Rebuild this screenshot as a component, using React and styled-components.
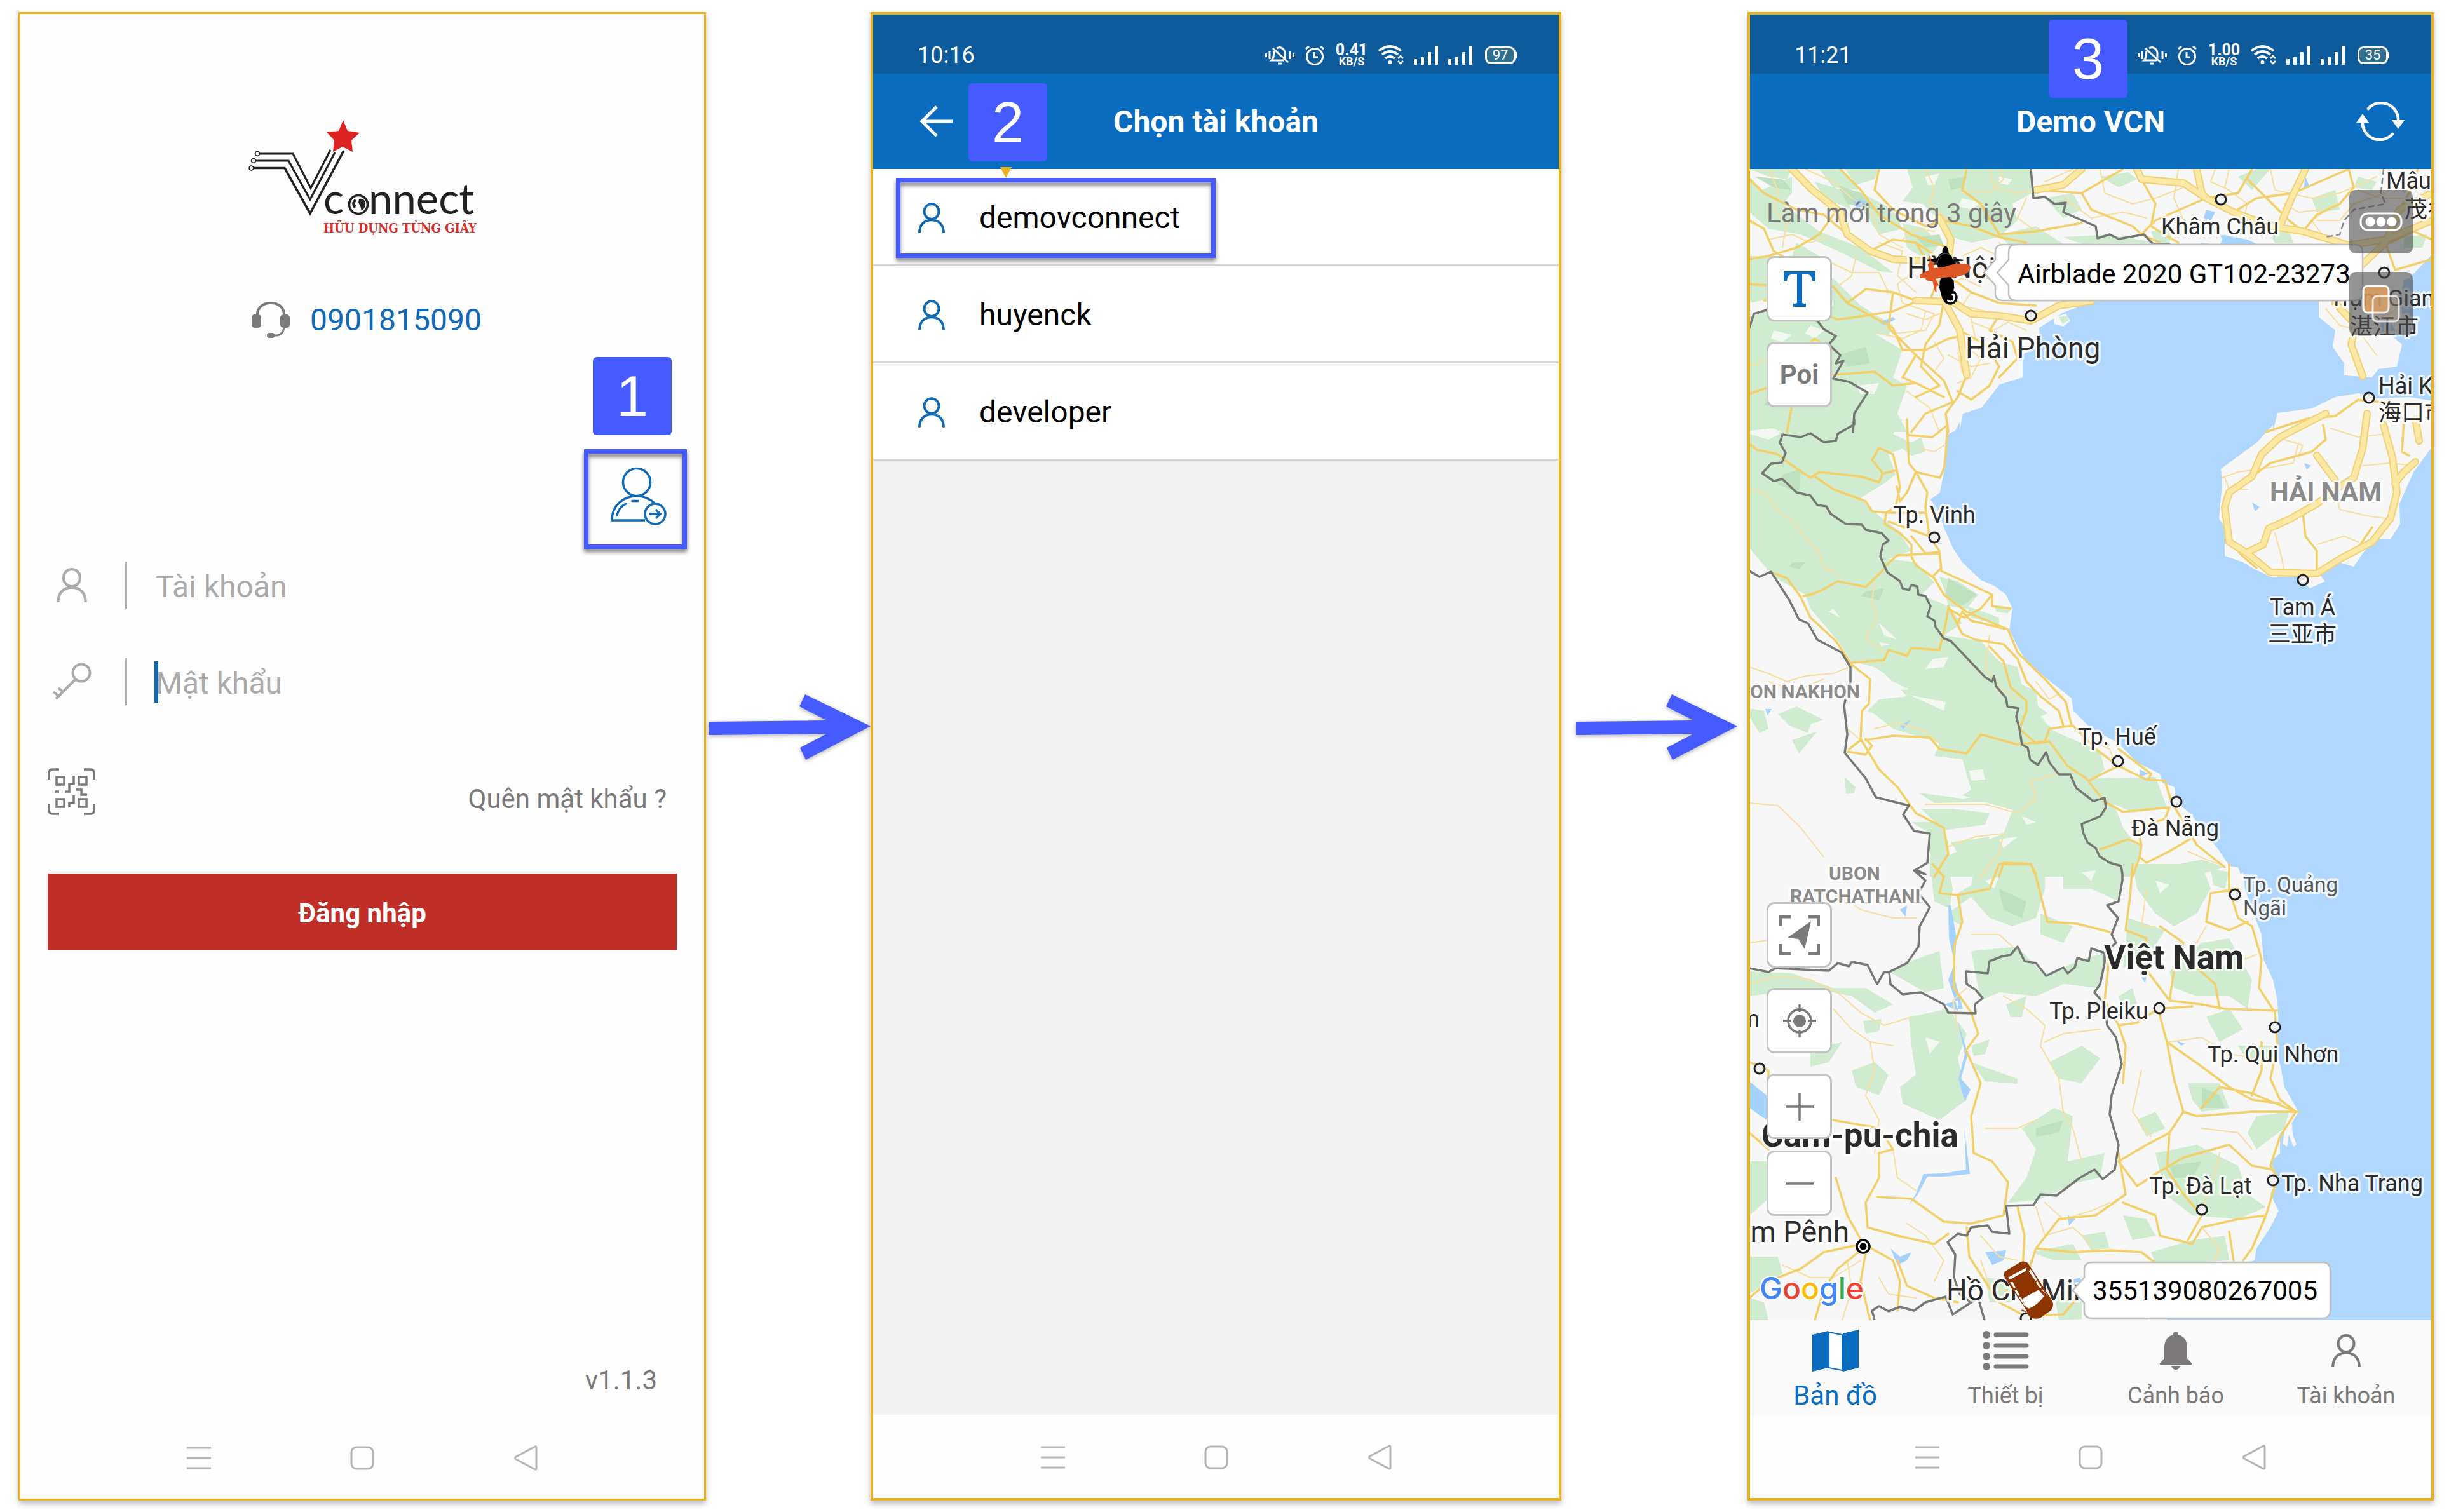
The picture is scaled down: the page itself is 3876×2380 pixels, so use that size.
import React from "react";
import styled, { createGlobalStyle } from "styled-components";

const GlobalStyle = createGlobalStyle`
  *, *::before, *::after { box-sizing: border-box; }
  body {
    margin: 0;
    background: #fff;
    font-family: Roboto, "Noto Sans CJK SC", sans-serif;
    color: #000;
  }
  button, input { font: inherit; color: inherit; }
  svg { display: block; flex: none; }
`;

const BLUE = "#096cbe";
const MARK = "#465bff";
const GREY = "#7b7979";

/* ---------- page ---------- */

const Page = styled.main`
  min-height: 100vh;
  padding: 19px 46px 18px 29px;
  display: grid;
  grid-template-columns: minmax(0, 1082fr) 259px minmax(0, 1087fr) 293px minmax(0, 1080fr);
`;

const Phone = styled.section`
  position: relative;
  min-width: 0;
  display: flex;
  flex-direction: column;
  border: ${(p) => (p.$thin ? 3 : 4)}px solid #e8b11f;
  background: #fefefe;
  box-shadow: 0 5px 8px rgba(60, 60, 80, 0.35);
`;

const ArrowCell = styled.div`
  display: flex;
  align-items: center;
  justify-content: flex-end;
  padding: 0 ${(p) => p.$inset || 0}px 92px 0;
  svg { filter: drop-shadow(0 2px 3px rgba(0, 0, 0, 0.3)); }
`;

const Step = styled.span`
  position: absolute;
  z-index: 3;
  top: ${(p) => p.$top}px;
  left: ${(p) => p.$left}px;
  width: 124px;
  height: 123px;
  display: grid;
  place-items: center;
  border-radius: 6px;
  background: ${MARK};
  color: #fff;
  font: 90px/120px "Liberation Sans", Arial, sans-serif;
`;

const Highlight = styled.span`
  position: absolute;
  top: ${(p) => p.$top}px;
  left: ${(p) => p.$left}px;
  width: ${(p) => p.$width}px;
  height: ${(p) => p.$height}px;
  border: 7px solid ${MARK};
  filter: drop-shadow(0 5px 3px rgba(0, 0, 0, 0.5));
  pointer-events: none;
`;

const Pointer = styled.span`
  position: absolute;
  top: -3px;
  left: 200px;
  border: 9px solid transparent;
  border-bottom-width: 0;
  border-top: 17px solid #e8b11f;
`;

const SystemNav = styled.nav`
  height: 131px;
  flex: none;
  padding-top: 3px;
  display: flex;
  align-items: center;
  justify-content: center;
  gap: 219px;
  background: #fefefe;
`;

const IconButton = styled.button`
  padding: 0;
  border: 0;
  background: none;
  display: grid;
  place-items: center;
  cursor: pointer;
`;

/* ---------- status bar and header ---------- */

const StatusBar = styled.div`
  height: 93px;
  flex: none;
  padding: 34px 68px 0 70px;
  display: flex;
  align-items: center;
  justify-content: space-between;
  background: #0d5b9b;
  color: #fff;
  font-size: 36px;
  line-height: 40px;
`;

const StatusIcons = styled.div`
  display: flex;
  align-items: center;
  gap: 16px;
`;

const Speed = styled.div`
  width: 52px;
  text-align: center;
  font-weight: 700;
  font-size: 25px;
  line-height: 19px;
  small { display: block; font-size: 18px; line-height: 17px; }
`;

const Battery = styled.span`
  position: relative;
  width: 48px;
  height: 28px;
  margin-left: 4px;
  border: 3px solid #fff;
  border-radius: 9px;
  background: #2f6e8c;
  text-align: center;
  font-size: 22px;
  line-height: 22px;
  &::after {
    content: "";
    position: absolute;
    top: 6px;
    right: -5px;
    width: 3px;
    height: 10px;
    background: #fff;
  }
`;

const Header = styled.header`
  position: relative;
  height: 150px;
  flex: none;
  padding: 0 42px 0 72px;
  display: grid;
  grid-template-columns: 80px 1fr 110px;
  align-items: center;
  background: ${BLUE};
  color: #fff;
`;

const BackButton = styled(IconButton)`
  justify-self: start;
`;

const RefreshButton = styled(IconButton)`
  justify-self: end;
`;

const HeaderTitle = styled.h1`
  margin: 0;
  padding-top: 2px;
  grid-column: 2;
  text-align: center;
  font-size: 48px;
  line-height: 54px;
  font-weight: 700;
`;

/* ---------- login ---------- */

const LogoWrap = styled.div`
  padding-top: 138px;
  display: flex;
  justify-content: center;
`;

const Hotline = styled.a`
  margin-top: 95px;
  padding-left: 14px;
  display: flex;
  justify-content: center;
  align-items: center;
  gap: 32px;
  color: #0f69b4;
  font-size: 48px;
  line-height: 58px;
  text-decoration: none;
`;

const SwitchRow = styled.div`
  position: relative;
  align-self: flex-end;
  margin: 174px 27px 0 0;
  padding: 0 0 8px 10px;
  width: 162px;
  height: 157px;
  display: grid;
  place-items: center;
`;

const Form = styled.form`
  flex: 1;
  padding: 20px 43px 30px;
  display: flex;
  flex-direction: column;
`;

const Field = styled.label`
  height: 74px;
  margin-bottom: 78px;
  display: grid;
  grid-template-columns: 75px 47px 1fr;
  align-items: center;
  justify-items: center;
`;

const FieldBox = styled.span`
  position: relative;
  width: 100%;
  height: 74px;
  padding-left: 45px;
  border-left: 3px solid #b0b0b0;
`;

const Input = styled.input`
  width: 100%;
  height: 74px;
  padding: 4px 0 0;
  border: 0;
  outline: 0;
  background: none;
  font-size: 48px;
  &::placeholder { color: #ababab; opacity: 1; }
`;

const Caret = styled.span`
  position: absolute;
  top: 5px;
  left: 43px;
  width: 6px;
  height: 65px;
  background: #0f69b4;
`;

const Extras = styled.div`
  margin-top: 21px;
  padding-right: 16px;
  display: flex;
  justify-content: space-between;
  align-items: flex-end;
`;

const Forgot = styled.a`
  color: ${GREY};
  font-size: 42px;
  line-height: 50px;
  text-decoration: none;
`;

const Submit = styled.button`
  margin-top: 92px;
  padding: 3px 0 0;
  height: 121px;
  border: 0;
  background: #bf2f28;
  color: #fff;
  font-size: 42px;
  font-weight: 700;
  cursor: pointer;
`;

const Version = styled.p`
  margin: auto 31px 0 0;
  text-align: right;
  color: ${GREY};
  font-size: 42px;
  line-height: 50px;
`;

/* ---------- account list ---------- */

const Accounts = styled.ul`
  flex: 1;
  margin: 0;
  padding: 0;
  list-style: none;
  background: #f3f3f3;
`;

const AccountRow = styled.li`
  position: relative;
  height: 153px;
  background: #fff;
  border-bottom: 3px solid #d6d6d6;
`;

const AccountButton = styled.button`
  width: 100%;
  height: 150px;
  padding: 3px 0 0 71px;
  border: 0;
  background: none;
  display: flex;
  align-items: center;
  gap: 54px;
  font-size: 48px;
  line-height: 56px;
  text-align: left;
  cursor: pointer;
`;

/* ---------- map ---------- */

const MapArea = styled.div`
  position: relative;
  flex: 1;
  min-height: 0;
  overflow: hidden;
`;

const MapCanvas = styled.svg`
  position: absolute;
  inset: 0;
  width: 100%;
  height: 100%;
  font-family: Roboto, "Noto Sans CJK SC", sans-serif;
`;

const RefreshNote = styled.p`
  position: absolute;
  top: 45px;
  left: 26px;
  margin: 0;
  color: ${GREY};
  font-size: 42px;
  line-height: 50px;
`;

const ToolStack = styled.div`
  position: absolute;
  left: 26px;
  ${(p) => (p.$bottom ? "bottom: 164px;" : "top: 137px;")}
  display: grid;
  gap: 32px;
`;

const ZoomPair = styled.div`
  display: grid;
  gap: 18px;
`;

const Tool = styled.button`
  width: 103px;
  height: 103px;
  padding: 0;
  border: 3px solid #c4c4c4;
  border-radius: 12px;
  background: #fff;
  display: grid;
  place-items: center;
  color: ${GREY};
  font-size: 42px;
  font-weight: 700;
  cursor: pointer;
`;

const ShadeStack = styled.div`
  position: absolute;
  top: 33px;
  right: 29px;
  display: grid;
  gap: 29px;
`;

const Shade = styled.button`
  width: 100px;
  height: 100px;
  padding: 0;
  border: 0;
  border-radius: 10px;
  background: rgba(75, 75, 75, 0.6);
  display: grid;
  place-items: center;
  cursor: pointer;
`;

const Tabs = styled.nav`
  height: 149px;
  flex: none;
  padding-top: 2px;
  display: grid;
  grid-template-columns: repeat(4, 1fr);
  background: #fafafa;
`;

const Tab = styled.a`
  display: grid;
  grid-template-rows: 92px 50px;
  align-content: start;
  justify-items: center;
  align-items: center;
  color: ${(p) => (p.$active ? BLUE : GREY)};
  font-size: ${(p) => (p.$active ? 42 : 36)}px;
  line-height: 50px;
  text-decoration: none;
`;

/* ---------- icons ---------- */

const Person = ({ color, width, height, stroke = 3 }) => (
  <svg width={width} height={height} viewBox="0 0 44 50" fill="none" stroke={color} strokeWidth={stroke}>
    <ellipse cx="22" cy="14.500" rx="12" ry="12.500" />
    <path d="M2 50C2 36 10 28.500 22 28.500S42 36 42 50" />
  </svg>
);

const Arrow = () => (
  <svg width="254" height="103" viewBox="0 0 254 103" role="img" aria-label="next step">
    <path fill={MARK} d="M0 43 185 41 142 19 151 0 254 50 152 103 143 84 185 62 0 64z" />
  </svg>
);

const Logo = () => (
  <svg width="420" height="220" viewBox="0 0 420 220">
    <path fill="#de2423" d="M180 29 187 46 206 49 193 61 195 79 179 71 164 79 166 61 154 48 173 46z" />
    <g fill="none" stroke="#222" strokeWidth="3.200">
      <path d="M49 82H101L129 136 160 76" />
      <path d="M43 93H94L128 154 167 80" />
      <path d="M39 104.500H88L128 176 181 77" strokeWidth="3.600" />
      <circle cx="45" cy="82" r="3.400" fill="#fff" strokeWidth="1.800" />
      <circle cx="39" cy="93" r="3.400" fill="#fff" strokeWidth="1.800" />
      <circle cx="35.500" cy="104.500" r="3.400" fill="#fff" strokeWidth="1.800" />
      <circle cx="204" cy="162" r="14.500" strokeWidth="3.600" />
    </g>
    <path fill="#222" d="M198 153l-4 6 1 7 4 2 1-5-2-3 3-4zM205 153c8-2 11 5 10 10s-5 8-6 9l-2-8-3-5z" />
    <g fontFamily="Lato, sans-serif" fontSize="67" fill="#222">
      <text x="149" y="177">c</text>
      <text x="220" y="177">nnect</text>
    </g>
    <text x="149" y="206" fontFamily='"DejaVu Serif Condensed", "DejaVu Serif", serif' fontWeight="700" fontSize="20" fill="#d62f2b">
      HỮU DỤNG TỪNG GIÂY
    </text>
  </svg>
);

const Headset = () => (
  <svg width="60" height="58" viewBox="0 0 60 58" fill="none" stroke={GREY}>
    <path d="M9 22V20C9 9 18 2 30 2S51 9 51 20V22" strokeWidth="4" />
    <path d="M51 38C51 48 46 52 40 53H32" strokeWidth="3" />
    <g fill={GREY} stroke="none">
      <rect x="0" y="20" width="15" height="21" rx="5" />
      <rect x="45" y="20" width="15" height="21" rx="5" />
      <rect x="24" y="49" width="12" height="8" rx="4" />
    </g>
  </svg>
);

const SwitchUser = () => (
  <svg width="92" height="94" viewBox="0 0 92 94" fill="none" stroke="#0f69b4" strokeWidth="3.500">
    <ellipse cx="43" cy="24" rx="21.500" ry="21.500" />
    <path d="M56 84H4C4 60 22 46 43 46c12 0 22 5 29 12" />
    <path d="M12 76c2-9 7-15 14-18M36 53.500h9" strokeLinecap="round" />
    <circle cx="72" cy="74" r="16" fill="#fefefe" />
    <path d="M64 74h15M74 68l6 6-6 6" strokeLinecap="round" />
  </svg>
);

const KeyIcon = () => (
  <svg width="62" height="60" viewBox="0 0 62 60" fill="none" stroke="#ababab" strokeWidth="4">
    <circle cx="46" cy="16" r="13.500" />
    <path d="M37 26 6 57M2 46l9 7M10 40l8 7" />
  </svg>
);

const QrIcon = () => (
  <svg width="75" height="74" viewBox="0 0 75 74" fill="none" stroke={GREY} strokeWidth="3.500">
    <path d="M2 18V8Q2 2 8 2H18M57 2H67Q73 2 73 8V18M73 56V66Q73 72 67 72H57M18 72H8Q2 72 2 66V56" />
    <path d="M14 14H26V26H14zM49 14H61V26H49zM14 49H26V61H14zM49 49H61V61H49z" />
    <path d="M41 12V25H34V37H28M12 37H18M45 34H53V42H62M41 43V55H34V62" />
  </svg>
);

const MenuGlyph = () => (
  <svg width="38" height="36" viewBox="0 0 38 36" stroke="#b4b4b4" strokeWidth="3">
    <path d="M0 2H38M0 18H38M0 34H38" />
  </svg>
);
const HomeGlyph = () => (
  <svg width="38" height="38" viewBox="0 0 38 38" fill="none" stroke="#b4b4b4" strokeWidth="3">
    <rect x="2" y="2" width="34" height="34" rx="8" />
  </svg>
);
const BackGlyph = () => (
  <svg width="38" height="42" viewBox="0 0 38 42" fill="none" stroke="#b4b4b4" strokeWidth="3" strokeLinejoin="round">
    <path d="M34 3Q36 2 36 5V37Q36 40 34 39L4 23Q1 21 4 19z" />
  </svg>
);

const PhoneNav = () => (
  <SystemNav aria-label="System">
    <IconButton type="button" aria-label="Menu"><MenuGlyph /></IconButton>
    <IconButton type="button" aria-label="Home"><HomeGlyph /></IconButton>
    <IconButton type="button" aria-label="Back"><BackGlyph /></IconButton>
  </SystemNav>
);

const MutedBell = () => (
  <svg width="46" height="32" viewBox="0 0 46 32" fill="none" stroke="#fff" strokeWidth="3">
    <path d="M1.500 13v6M7 10v12M39 10v12M44.500 13v6" />
    <path d="M23 1v3M18 5C25 1 31 7 31 13V20M14 9c-1 8 0 11-4 15H30M12 5 36 27" />
    <path d="M20 29h6" />
  </svg>
);
const Alarm = () => (
  <svg width="32" height="32" viewBox="0 0 32 32" fill="none" stroke="#fff" strokeWidth="3">
    <circle cx="16" cy="18" r="12.500" />
    <path d="M15 11V19H21M2 6 7 2M30 6 25 2" />
  </svg>
);
const Wifi = () => (
  <svg width="40" height="32" viewBox="0 0 40 32" fill="none" stroke="#fff" strokeWidth="3.800">
    <path d="M1 9Q18-5 36 9M6 15Q18 5 31 15M11 21Q18 15 26 21" />
    <circle cx="18.500" cy="27" r="3" fill="#fff" stroke="none" />
    <path d="M31 21 35 17 39 21M31 25 35 29 39 25" strokeWidth="2.500" />
  </svg>
);
const Signal = () => (
  <svg width="38" height="30" viewBox="0 0 38 30" fill="#fff">
    <rect x="0" y="21" width="5" height="9" rx="1" />
    <rect x="11" y="18" width="5" height="12" rx="1" />
    <rect x="22" y="10" width="5" height="20" rx="1" />
    <rect x="33" y="0" width="5" height="30" rx="1" />
  </svg>
);

const PhoneStatus = ({ time, speed, battery }) => (
  <StatusBar>
    <span>{time}</span>
    <StatusIcons>
      <MutedBell />
      <Alarm />
      <Speed>{speed}<small>KB/S</small></Speed>
      <Wifi />
      <Signal />
      <Signal />
      <Battery>{battery}</Battery>
    </StatusIcons>
  </StatusBar>
);

/* ---------- map data ----------
   The map is kept as three survey sheets, each with its own grid.
   [x scale, x shift, y scale, y shift] brings a sheet into map units. */

const SHEETS = {
  n: [0.7245, -14, 0.4337, -266],
  m: [0.7245, -14, 0.4592, 394],
  s: [0.7245, -14, 0.6505, 1094],
};

const line = (...parts) => {
  const out = [];
  parts.forEach(([sheet, pts]) => {
    const [sx, dx, sy, dy] = SHEETS[sheet];
    const v = pts.trim().split(/[\s,]+/).map(Number);
    for (let i = 0; i < v.length; i += 2) {
      out.push(`${Math.round(v[i] * sx + dx)} ${Math.round(v[i + 1] * sy + dy)}`);
    }
  });
  return `M${out.join("L")}`;
};
const lines = (sheet, list) => list.map((pts) => line([sheet, pts])).join("");

const SEA = line(
  ["n", "1500 925 1450 1010 1255 1090 1180 1000 1130 890 1080 880 1050 850 1040 890 1000 880 940 960 850 1060 800 1090 760 1096 700 1135 648 1190 650 1240 612 1290 612 1370 562 1395 522 1480 482 1500 475 1560"],
  ["m", "475 10 465 40 445 55 443 120 440 180 432 250 412 275 430 320 440 370 460 440 480 490 520 550 550 570 575 600 590 650 583 720 600 780 620 830 660 885 718 955 722 1000 760 1060 820 1110 860 1175 910 1215 915 1245 942 1260 945 1310 975 1350 1000 1400 1040 1480 1060 1530 1080 1535 1085 1560"],
  ["s", "1090 20 1095 60 1110 110 1130 170 1135 230 1155 280 1165 330 1168 400 1160 440 1172 490 1180 540 1210 600 1190 640 1170 650 1170 700 1150 720 1165 760 1150 800 1168 840 1150 880 1120 930 1115 960 1080 970 1000 1010 950 1080 915 1110 1520 1110"],
  ["n", "1520 925"]
);

const HAINAN = line(
  ["n", "1155 1566 1165 1498 1240 1482 1290 1440 1340 1428 1385 1445 1450 1440 1520 1460"],
  ["m", "1520 60 1500 95 1460 180 1430 290 1432 360 1410 410 1380 410 1350 460 1330 505 1300 490 1255 530 1268 555 1235 580 1210 540 1150 540 1115 515 1090 490 1050 468 1050 370 1038 340 1045 220 1042 170 1120 80 1155 20"]
);

const LEIZHOU = lines("n", [
  "1255 1060 1255 1150 1290 1200 1285 1260 1310 1320 1310 1362 1370 1370 1385 1340 1425 1330 1435 1250 1410 1215 1440 1170 1430 1090 1440 1020 1400 950 1250 950",
  "680 1150 705 1140 715 1165 700 1185 680 1175",
]);

const SPIT = lines("s", ["1188 622 1196 630 1198 655 1206 680 1200 684 1190 655 1186 684 1176 676 1182 640"]);

const GREEN = [
  lines("n", [
    "360 613 630 613 632 700 590 740 600 800 560 860 500 880 440 850 430 800 395 740 350 730 372 680",
    "18 640 45 690 110 640 110 700 90 740 170 840 260 900 330 990 300 985 210 910 130 850 60 830 18 770",
    "20 613 110 613 100 650 60 640",
    "170 613 215 613 260 690 200 680",
    "225 613 300 613 290 650 250 670",
    "160 660 220 690 240 760 180 720",
    "250 690 330 760 350 830 300 850 270 780",
    "350 810 400 830 430 890 400 940 360 900",
    "20 930 70 930 60 990 110 1010 80 1080 18 1100",
    "18 1150 60 1115 120 1150 200 1110 190 1060 130 1020 200 1010 260 1110 330 1180 320 1220 290 1210 350 1270 330 1370 360 1400 340 1500 360 1568 18 1568",
    "120 880 170 930 160 960 110 930",
    "660 720 720 700 740 760 700 790",
    "700 860 800 850 900 880 740 885",
    "560 850 640 820 700 885 580 885",
    "780 640 840 625 860 650 820 680",
    "1080 640 1120 613 1150 613 1110 690",
    "1240 720 1290 690 1300 760 1250 770",
    "1340 640 1380 660 1370 690 1330 680",
    "1150 850 1190 835 1200 880 1160 884",
    "1440 860 1490 850 1480 900 1440 900",
    "890 840 940 830 930 880 900 885",
    "690 1150 708 1145 712 1162 698 1175",
  ]),
  lines("m", [
    "18 0 350 0 330 50 370 80 390 60 400 110 370 125 350 100 320 120 335 190 310 220 260 270 300 330 340 380 370 450 320 480 380 490 420 560 390 600 450 640 480 700 440 740 520 760 560 830 600 850 610 910 640 930 645 985 670 1010 655 1030 680 1070 780 1140 790 1200 770 1230 900 1225 925 1330 850 1345 810 1320 830 1400 870 1480 850 1568 450 1568 440 1500 570 1420 590 1340 480 1290 500 1270 480 1165 420 1155 430 1110 330 1060 290 1010 275 1000 300 960 360 950 310 870 290 850 240 830 210 760 150 650 140 600 70 540 18 440",
    "430 540 470 555 515 600 490 650 450 640 440 580",
    "490 640 560 680 560 705 500 680",
    "550 640 590 645 580 665 555 660",
    "18 990 50 1000 60 1060 40 1075 18 1020",
    "80 1010 120 985 180 1030 150 1045 145 1075 105 1050",
    "110 1100 165 1070 125 1145",
    "385 1280 480 1300 540 1290 545 1310 420 1315",
    "390 1335 460 1335 540 1350 530 1390 440 1410",
    "370 1380 430 1380 450 1450 440 1568 410 1568 410 1420",
    "455 1450 540 1430 530 1490 470 1485",
    "225 1225 248 1260 245 1280 228 1285",
    "800 1440 870 1460 860 1520 800 1510",
    "930 1530 1000 1510 1050 1535 980 1568",
  ]),
  lines("s", [
    "410 0 450 0 460 60 450 130 480 150 470 70 500 50 510 0 660 0 660 60 640 130 590 150 540 130 500 80 460 110 420 90",
    "700 0 830 0 820 90 760 60 700 60",
    "850 0 1000 0 1020 60 990 120 940 150 900 120 860 60",
    "1020 10 1060 20 1050 60 1025 50",
    "500 210 600 200 660 270 730 235 790 215 780 300 700 290 640 320 560 310 520 330",
    "650 120 720 150 700 190 650 170",
    "18 260 110 265 200 300 270 300 330 340 290 360 240 320 150 300 18 320",
    "320 260 380 230 430 210 440 300 400 310",
    "365 370 450 350 490 410 470 470 490 570 430 620 350 580 345 540 380 510 370 440",
    "240 500 290 480 320 510 300 560 250 540",
    "265 380 305 375 300 405 270 410",
    "500 480 600 520 600 532 530 525",
    "500 440 540 425 530 460 505 465",
    "575 340 620 320 610 370 585 370",
    "150 450 220 430 190 480 150 490",
    "610 640 680 590 720 610 710 720 790 700 780 760 730 770 640 815 580 820 620 760 640 690",
    "670 480 740 440 780 470 740 530 690 520",
    "840 130 920 160 880 230 830 250",
    "930 260 1000 190 1060 180 1110 280 1100 350 1060 320 990 320 940 300",
    "1010 370 1060 350 1090 400 1040 430",
    "1080 440 1160 440 1150 480 1100 475",
    "970 530 1040 530 1060 590 1000 600 980 570",
    "1120 610 1190 600 1180 640 1120 690 1100 650",
    "820 320 850 300 860 340 830 360",
    "860 620 900 600 920 640 880 660",
    "900 700 990 680 1080 730 1100 800 1140 830 1080 860 980 850 920 800",
    "830 850 880 860 900 900 850 910",
    "890 940 980 910 1050 900 1060 960 960 965 900 965",
    "630 940 720 920 740 960 680 960",
    "740 900 790 890 800 930 760 935",
    "18 720 80 720 70 800 18 850",
    "18 950 80 950 90 990 18 1040",
    "530 1000 600 1010 590 1060 540 1060",
    "680 1040 740 1020 740 1100 690 1103",
    "18 1050 50 1060 60 1103 18 1103",
  ]),
].join("");

const DARK_GREEN = [
  lines("n", [
    "30 640 90 650 110 690 70 680",
    "210 1290 270 1260 280 1320 230 1330",
    "210 670 260 700 290 760 230 740",
    "380 860 430 850 440 890 400 900",
    "60 1440 110 1420 90 1470 50 1470",
    "450 650 490 640 480 680 455 690",
    "530 760 570 770 550 810 525 800",
  ]),
  lines("m", [
    "90 190 130 170 125 250 80 225",
    "450 545 512 600 480 640 445 600",
    "110 490 140 490 125 515 105 505",
    "270 590 310 580 300 620 260 605",
  ]),
  lines("s", [
    "560 60 620 90 610 130 570 110",
    "1000 540 1040 560 1050 590 1000 590",
    "640 640 700 620 690 650 640 660",
    "930 730 1000 720 980 760 940 760",
  ]),
].join("");

const CLEARINGS = [
  lines("n", [
    "400 640 430 630 420 670 405 670",
    "480 720 520 735 500 760 470 750",
    "560 640 590 650 580 670 560 665",
    "70 1200 110 1215 90 1240 65 1230",
    "250 1400 300 1390 290 1430 260 1430",
    "150 1180 180 1200 160 1230 140 1210",
  ]),
  lines("m", [
    "18 50 60 70 90 45 70 30 18 40",
    "300 700 340 755 310 740",
    "300 765 325 770 305 778",
    "415 820 450 815 440 850 400 855",
    "320 890 365 925 340 930",
    "365 945 445 970 440 1000 400 970",
    "200 650 215 680 190 660",
    "650 1020 675 1000 670 1040",
    "495 1205 525 1200 530 1235 500 1240",
    "610 1360 640 1380 620 1390",
    "560 1440 600 1430 570 1470",
  ]),
  lines("s", [
    "530 40 560 30 550 60",
    "740 20 770 15 760 40",
    "900 40 930 50 910 70",
    "400 420 430 430 410 460",
    "960 760 1010 770 990 800",
    "1030 220 1060 230 1040 260",
  ]),
].join("");

const WATER = [
  lines("n", [
    "240 720 270 730 270 750 250 755",
    "1225 640 1235 680 1222 685",
    "1010 760 1030 770 1020 800 1005 790",
    "1040 850 1100 870 1120 885 1050 885",
    "300 1170 330 1150 335 1160 310 1180",
    "1375 1150 1400 1130 1420 1200 1390 1210",
  ]),
  lines("m", ["1223 150 1238 158 1228 172", "1110 285 1126 300 1116 315", "345 1050 368 1030 352 1062", "52 992 66 992 58 1015", "865 1200 885 1215 865 1225"]),
  lines("s", [
    "450 100 452 180 464 240 450 280 470 350 482 350 462 270 468 180 455 100",
    "440 340 470 330 470 355",
    "470 380 493 460 478 520 498 545 486 575 472 520 486 460",
    "484 640 497 750 440 756 404 756 384 800 364 826 380 798 396 750 440 748 488 740",
    "18 525 55 560 55 620 18 590",
    "530 940 575 935 570 960 545 970",
    "325 930 345 950 370 940 360 960 340 970",
    "710 850 726 860 712 875",
    "720 1005 735 1000 745 1020 722 1020",
    "345 110 360 100 358 128",
    "945 428 965 435 955 440",
    "870 275 880 270 878 288",
  ]),
].join("");

const BORDERS = [
  lines("n", [
    "630 613 635 720 660 715 680 740 705 735 700 770 770 820 775 865 800 850 820 868 875 850 895 885 930 885",
    "18 1190 28 1140 55 1125 165 1165 180 1195 205 1220 190 1250 215 1290 205 1320 222 1310 200 1375 235 1385 275 1425 245 1500 243 1568",
  ]),
  line(
    ["m", "245 0 245 18 210 50 205 75 180 78 150 48 130 60 90 52 84 80 96 115 88 148 65 152 45 185 70 212 90 205 120 250 150 262 165 295 185 298 195 325 228 360 262 362 270 380 305 390 320 415 308 430 302 470 318 525 345 555 350 580 365 585 370 568 382 572 385 600 400 605 412 640 405 675 420 690 422 712 440 752 455 760 530 885 545 900 550 880 553 915 575 955 578 985 602 990 598 1020 605 1060 610 1115 622 1125 628 1168 645 1185 662 1142 670 1175 690 1218 715 1218 728 1262 765 1308 790 1298 792 1330 780 1362 740 1387 742 1415 752 1450 770 1470 778 1498 800 1520 825 1530 828 1560"],
    ["s", "828 40 820 90 795 100 818 130 805 170 815 190 790 215 790 240 780 290 768 310 790 340 795 390 815 420 827 485 805 560 800 605 820 680 812 740 785 762 768 740 735 760 685 802 650 800 635 825 575 827 582 895 545 890 535 875 500 880 490 900 470 895 448 915 465 945 462 1000 475 1040 500 1060 515 1050 528 1103"]
  ),
  line(
    ["m", "18 520 40 540 65 522 105 620 125 685 145 698 165 755 218 800 238 850 238 900 223 980 230 1080 225 1143 270 1230 293 1295 365 1323 352 1355 375 1412 410 1420 405 1520 380 1545 400 1560"],
    ["s", "375 15 400 40 385 70 410 105 388 150 385 200 360 240 322 262 325 290 350 315 390 310 440 340 450 360 510 362 508 340 525 325 510 305 490 290 488 260 535 265 540 235 565 225 585 220 600 200 615 235 640 240 662 270 700 250 710 265 725 250 730 228 755 235 760 205 790 215"]
  ),
  lines("s", [
    "18 252 60 262 75 252 190 258 210 240 235 248 240 237 275 245 295 290 310 262 322 262",
    "290 1103 285 1080 300 1070 320 1082 345 1072 375 1080 400 1060 445 1047 460 1090 500 1060",
  ]),
].join("");

const HIGHWAYS = [
  lines("n", [
    "110 613 155 690 215 770 230 850 280 910 330 940 430 950 450 1000 440 1090 475 1200 490 1360",
    "380 1090 460 1095 500 1140 560 1145 630 1165 690 1110 760 1092",
    "430 790 455 870 450 950",
    "640 690 700 670 740 613",
    "860 613 870 650 960 665 1010 720 1070 770 1150 820 1220 840 1280 870 1320 890 1400 870 1500 800",
    "990 613 1000 700 1010 720",
    "1225 613 1195 720 1170 820",
    "1350 1365 1325 1250 1335 1180 1290 1100 1330 990 1400 880 1430 760 1500 700",
  ]),
  lines("m", [
    "1270 -20 1170 60 1130 120 1110 195 1060 250 1050 300 1060 420 1100 460 1150 525 1250 530 1300 480 1370 420 1410 340 1425 250 1415 130 1395 20",
    "1360 -20 1350 100 1330 200 1300 230 1250 290 1190 345 1145 375 1135 430 1100 455",
    "1250 125 1290 210",
    "1420 220 1440 180 1465 145",
    "1465 0 1473 75",
  ]),
].join("");

const ROADS = [
  lines("n", [
    "18 650 50 700 120 760 180 780 230 850",
    "215 613 260 690 300 780 370 850 450 900",
    "300 613 290 690 330 760 400 820 440 800 500 820 560 860 620 880",
    "490 613 480 690 520 740 560 850 640 840 740 810",
    "18 940 60 930 120 900 170 850 200 780",
    "18 1030 90 1040 150 1010 200 1040 230 1100 330 1190 350 1270",
    "50 1090 120 1100 210 1160 250 1150 330 1130 380 1095",
    "230 1100 270 1050 330 1060 380 1090",
    "330 1060 320 1190 380 1290 440 1380 460 1460 400 1500 370 1568",
    "440 1090 430 1180 400 1250 390 1330 430 1400 380 1440",
    "475 1200 530 1250 560 1330 540 1400 500 1450 470 1420",
    "560 1145 540 1200 590 1240 600 1300 560 1370",
    "200 1360 290 1350 330 1400 380 1390 440 1440",
    "18 1430 70 1400 110 1470 100 1568",
    "280 910 330 870 380 880 450 960 540 1010",
    "450 1000 500 1060 560 1100 640 1110",
    "640 690 740 700 800 640 830 613",
    "740 700 760 760 850 820 870 850 910 880",
    "870 650 900 740 890 820 950 880",
    "1010 720 940 770 900 800 870 850",
    "1010 720 1080 700 1110 613",
    "1070 770 1120 720 1200 700 1320 613",
    "1320 613 1330 680 1300 740 1250 780 1220 840",
    "1220 840 1190 800 1100 650",
    "1410 880 1460 840 1500 870",
    "1400 880 1420 980 1500 940",
    "18 800 50 830 70 910 120 960 110 1010",
    "110 1290 160 1230 200 1270",
    "380 880 400 940 430 1000 410 1090",
    "1470 613 1450 700 1430 760",
    "490 1360 470 1440 445 1500 450 1568",
    "350 1270 400 1270 450 1230 480 1220",
    "380 1290 350 1370 380 1390",
    "1140 1568 1230 1520 1290 1510 1340 1450 1500 1480",
  ]),
  lines("m", [
    "18 85 35 105 80 120 100 145 150 200 170 180 260 195 300 215 308 185 285 140 300 98 330 120 338 175 310 185",
    "160 195 200 240 270 280 285 315 315 320 400 320",
    "360 0 362 60 365 150 380 180 432 200 440 170 445 120 448 20 415 60 365 55",
    "380 180 405 250 400 300 408 400 430 450 435 520 490 560 545 600 545 640 585 650",
    "338 230 345 280 360 250 380 180",
    "338 175 345 230 335 300 315 320 312 360 345 390 370 430 370 470 380 500 420 545 440 600 490 660 580 720 600 800 660 890 705 970 718 1050",
    "320 350 370 380 408 400",
    "370 400 400 460 430 455",
    "315 500 340 465 430 460 435 510 415 540",
    "310 515 270 575 210 555 175 585 150 600 135 605",
    "65 525 100 545 130 610 150 680 205 760 240 840 280 890 278 975 262 1000 260 1095 300 1200 340 1260 380 1350 440 1400 450 1490 420 1568",
    "240 835 310 825 320 790 360 810 370 785 430 790 445 700 450 650 485 680 520 650 545 600",
    "450 640 480 735 510 755 570 770 600 820 620 900 650 950 690 1000 700 1050",
    "470 700 480 660 500 690 580 720",
    "540 780 570 830 585 920 620 965 620 1000 605 1060 640 1110 670 1105 710 1190 750 1230 790 1310 830 1345 930 1330",
    "270 1100 330 1085 410 1090 430 1130 490 1145 520 1080 600 1115 660 1105 670 1060 720 1050",
    "230 1140 270 1150 285 1120 270 1095",
    "235 1130 260 1100",
    "720 1050 770 1130 820 1190 880 1235 920 1240 935 1310 960 1380 990 1460 1050 1535",
    "755 1240 790 1210 820 1190",
    "820 1130 890 1215 885 1235",
    "930 1330 920 1370 860 1400 870 1460 840 1440 780 1475",
    "975 1440 930 1480 880 1520 865 1500 870 1460",
    "865 1500 850 1568",
    "560 1568 570 1520 630 1525 640 1560",
    "1110 195 1150 150 1240 110 1270 70 1265 20",
    "1220 320 1225 400 1250 450 1250 520",
    "1060 420 1090 470 1120 510",
    "1370 370 1340 440 1300 490",
    "1440 0 1435 110 1450 125",
  ]),
  lines("s", [
    "415 0 440 30 430 70 470 75 480 140 462 200 462 300 500 360 515 410 488 450 520 530 500 610 505 700 545 720 580 770 570 850 500 870 440 865 370 810 295 805",
    "470 75 540 60 560 0 630 0 640 30 665 140 730 145 800 165",
    "850 0 845 80 835 160 880 180 870 240 930 330 1000 340 1050 350 1165 355",
    "800 215 790 330 820 390 860 385 905 350 980 345",
    "820 390 835 440 830 530",
    "905 350 925 430 940 520 960 600 990 610 1110 600 1210 600",
    "925 430 1000 490 1060 540 1110 570 1170 580",
    "1000 590 1040 540 1110 555 1205 600",
    "1060 0 1060 60 1080 130 1110 150 1130 230 1125 300 1160 360 1165 440 1150 520 1170 570 1205 600 1170 660 1150 730 1165 760 1140 850 1110 930 1090 960",
    "1080 60 1020 70 1010 140 1060 160 1100 140",
    "910 150 960 190 940 260 930 330",
    "990 250 1030 290 1040 350",
    "1130 430 1130 500 1110 560",
    "960 600 930 650 880 680 820 720 860 780 900 750 960 710 1060 680 1110 730 1155 740",
    "820 700 835 800 770 850 690 860 640 930 620 1000",
    "830 820 900 850 910 900 980 920 1000 880 1080 860 1140 850",
    "930 650 925 740 960 800 1000 850 970 910",
    "300 700 300 760 270 820 275 880 340 900 420 920 450 895",
    "200 620 300 640 330 690 300 700",
    "205 760 230 850 265 920 330 960 345 1010 340 1080",
    "265 920 180 940 130 980 60 1010 18 1050",
    "265 930 210 980 180 1030 160 1103",
    "270 940 260 1010 280 1103",
    "340 960 360 1020 420 1050 470 1060",
    "18 480 60 500 60 560",
    "18 650 60 690",
    "600 830 615 900 612 980 640 1060",
    "490 880 495 950 530 1010 560 1060 618 1095",
    "640 930 720 940 800 935 870 940 900 965",
    "1060 890 1070 960",
    "618 1095 700 1090 745 1030",
  ]),
].join("");

const LANES = [
  lines("n", [
    "140 613 200 660 240 720 280 760 300 850 350 900",
    "60 613 80 690 70 760 100 810 90 900",
    "400 613 420 680 410 740 450 800",
    "540 613 550 680 600 700 640 690",
    "560 880 600 940 540 1000",
    "120 960 190 950 240 990 300 990 320 1060",
    "250 930 240 1000 210 1040",
    "380 980 340 1030 350 1100 420 1140 400 1200 330 1210",
    "500 1060 480 1110 530 1130",
    "400 1130 390 1200 350 1230 300 1210",
    "500 1170 550 1200 580 1170 620 1200",
    "490 1260 520 1300 500 1370 470 1390",
    "780 613 790 700 850 740 900 720 960 680",
    "660 660 720 613",
    "950 613 940 720 960 800 930 850",
    "1060 613 1050 680 1100 740 1090 800 1160 850",
    "1150 613 1160 690 1240 720 1300 700 1380 640",
    "1250 800 1300 800 1330 740 1400 700",
    "1270 870 1240 800 1290 740",
    "1440 1100 1400 1150 1350 1180",
    "1270 1120 1300 1180 1340 1200 1380 1290",
    "360 1420 410 1480 430 1568",
    "18 1330 60 1300 120 1350 180 1340",
    "560 613 570 650 540 700 480 690",
    "620 720 600 790 640 840",
    "300 880 350 910 340 1000 380 1060",
    "350 870 380 830 420 840",
    "480 930 520 900 560 930 600 910",
    "400 1010 440 1030 480 1010 520 1040",
    "360 1140 400 1160 430 1140",
    "450 1290 500 1330 540 1320",
    "420 1240 440 1300 420 1350",
    "60 870 110 850 150 880 190 860",
    "700 720 760 790 830 770 880 790",
    "1030 613 1020 660 1060 690",
    "1340 690 1390 720 1440 720",
    "1180 740 1210 770 1260 760",
    "150 1060 180 1110 170 1160",
    "640 1050 600 1080 560 1060",
    "500 1160 510 1230 470 1280 480 1350",
  ]),
  lines("m", [
    "18 240 50 250 80 310 110 350 140 400 170 460 180 510 210 530",
    "290 560 285 620 295 680 270 750 310 800",
    "18 850 60 870 100 900 140 880 200 870 235 850",
    "18 1315 80 1325 130 1400 180 1500",
    "180 890 120 930 60 900",
    "540 740 530 850 560 920 600 960",
    "225 1000 230 1060 260 1100",
    "290 1060 340 1040 400 1070 430 1110",
    "690 1215 630 1240 640 1300 600 1350 530 1320 400 1320",
    "440 1470 510 1430 570 1420 560 1490 520 1568",
    "1045 200 1080 180 1130 170 1200 150 1210 80",
    "1290 240 1300 310 1360 330 1400 340",
    "1160 390 1170 450 1180 520",
    "1250 430 1310 400 1340 420",
    "1350 160 1410 150 1460 160",
    "1280 30 1340 60 1400 50",
    "640 900 670 960 690 940",
    "770 1110 800 1130 810 1170",
    "1050 200 1060 240 1100 240",
    "970 1480 1010 1510 1050 1530",
    "390 100 420 110 440 90",
    "1180 70 1220 90 1210 130",
  ]),
  lines("s", [
    "200 60 260 110 330 130 380 130",
    "18 190 60 185 110 200",
    "18 290 80 270 150 280 210 310 260 360 310 390 370 370",
    "200 350 240 400 280 430 330 440",
    "280 430 290 500 270 560 300 620 290 700",
    "570 320 620 350 660 390 650 440 690 520 700 600 720 640 740 720",
    "660 430 700 410 780 400",
    "530 640 600 640 640 620",
    "490 300 460 330 470 400",
    "880 60 870 150 900 150",
    "990 190 1010 150",
    "1030 200 1070 240 1120 220",
    "930 430 1000 420 1060 460 1120 470",
    "870 500 850 600 890 660",
    "1000 640 1080 650 1110 690",
    "1040 700 1020 790 1000 830",
    "640 830 660 900 720 880 760 920",
    "660 820 700 860 760 840 800 820",
    "330 690 340 760 380 790",
    "360 870 400 900 440 960 420 1010",
    "90 970 150 1000 200 1000 260 960",
    "520 900 560 950 600 960",
    "520 960 540 1020 600 1040",
    "500 170 560 170 590 200",
    "230 960 240 1030 220 1103",
    "300 1000 320 1040 380 1050",
    "880 1103 890 1000 940 990",
    "1000 880 1040 930 1030 960",
  ]),
].join("");

const LABELS = [
  { x: 647, y: 103, t: "Khâm Châu" },
  { x: 247, y: 172, t: "Hà Nội", s: 46 },
  { x: 339, y: 298, t: "Hải Phòng", s: 46 },
  { x: 1001, y: 31, t: "Mâu" },
  { x: 1030, y: 76, t: "茂名" },
  { x: 912, y: 216, t: "Trạm Giang" },
  { x: 944, y: 261, t: "湛江市" },
  { x: 989, y: 354, t: "Hải K" },
  { x: 989, y: 396, t: "海口市" },
  { x: 818, y: 523, t: "HẢI NAM", s: 42, w: 700, c: "#8b8b8b" },
  { x: 225, y: 557, t: "Tp. Vinh" },
  { x: 818, y: 702, t: "Tam Á" },
  { x: 815, y: 745, t: "三亚市" },
  { x: 0, y: 833, t: "ON NAKHON", s: 30, w: 700, c: "#8b8b8b" },
  { x: 516, y: 906, t: "Tp. Huế" },
  { x: 600, y: 1050, t: "Đà Nẵng" },
  { x: 124, y: 1119, t: "UBON", s: 30, w: 700, c: "#8b8b8b" },
  { x: 63, y: 1155, t: "RATCHATHANI", s: 30, w: 700, c: "#8b8b8b" },
  { x: 776, y: 1138, t: "Tp. Quảng", s: 33, c: "#555" },
  { x: 776, y: 1175, t: "Ngãi", s: 33, c: "#555" },
  { x: 557, y: 1259, t: "Việt Nam", s: 53, w: 700 },
  { x: 471, y: 1338, t: "Tp. Pleiku" },
  { x: 720, y: 1406, t: "Tp. Qui Nhơn" },
  { x: 15, y: 1350, t: "m", a: "end" },
  { x: 18, y: 1539, t: "Cam-pu-chia", s: 53, w: 700 },
  { x: 628, y: 1613, t: "Tp. Đà Lạt" },
  { x: 836, y: 1609, t: "Tp. Nha Trang" },
  { x: 156, y: 1689, t: "om Pênh", s: 46, a: "end" },
  { x: 309, y: 1781, t: "Hồ Chí Minh", s: 46 },
];

const TOWNS = [
  [741, 48], [442, 231], [998, 163], [974, 360], [290, 580], [870, 647], [579, 932], [671, 996],
  [763, 1142], [644, 1321], [826, 1351], [15, 1416], [823, 1592], [711, 1638], [434, 1809],
];

const GOOGLE = [["G", "#4285f4"], ["o", "#ea4335"], ["o", "#fbbc05"], ["g", "#4285f4"], ["l", "#34a853"], ["e", "#ea4335"]];

const callout = (x, y, right, h) =>
  `M${x + 12} ${y}H${right - 12}Q${right} ${y} ${right} ${y + 12}V${y + h - 12}Q${right} ${y + h} ${right - 12} ${y + h}H${x + 12}Q${x} ${y + h} ${x} ${y + h - 12}V${y + h / 2 + 20}L${x - 18} ${y + h / 2}L${x} ${y + h / 2 - 20}V${y + 12}Q${x} ${y} ${x + 12} ${y}z`;

const Motorbike = () => (
  <g transform="translate(206 104) scale(0.33333)">
    <circle cx="327" cy="294" r="35" fill="#000" />
    <path d="M327 278a18 18 0 1 1-14 28M338 276a22 22 0 0 1-8 40" fill="none" stroke="#fff" strokeWidth="7" />
    <path fill="#000" d="M290 68Q305 38 318 68L320 86 334 100 338 112 388 116 388 122 345 124 352 140 330 200 344 215 346 250 330 290 290 300 276 250 278 215 290 200 268 150 266 128 218 122 218 116 266 108 276 92 290 84z" />
    <path fill="#dd5727" d="M182 192Q190 180 226 166L222 140 230 128 228 98 234 98 238 126 250 130 252 156 300 150Q330 136 380 134 420 134 424 152 420 176 386 190 340 206 300 202L258 206 274 238 262 240 262 272 254 262 244 218 220 216 208 204 184 204z" />
    <path d="M298 150q8-20 24-8M280 208q20-8 50-8" fill="none" stroke="#000" strokeWidth="3" />
    <path d="M276 98q28-20 58 0l10 22M268 130q4-24 12-34" fill="none" stroke="#aaa" strokeWidth="1.500" />
  </g>
);

const Car = () => (
  <g transform="translate(326 1705) scale(0.33333)">
    <path fill="#8f3600" d="M224 92 296 48Q318 38 334 52L450 232Q458 254 444 274L396 308Q366 322 342 306L318 262 224 120Q220 104 224 92z" />
    <path fill="#fff" d="M240 120 328 72 326 88 248 130zM346 80 378 130 370 136 338 90zM378 136 398 166 392 172 372 144zM404 176 430 208 398 176zM308 220 384 178 410 208Q380 250 340 266 326 262 320 252zM250 142 262 140 276 168 268 172zM270 178 280 176 296 204 286 206zM290 210 302 212 324 262 318 256z" />
    <path d="M440 188 446 204M304 274 324 280" stroke="#8f3600" strokeWidth="6" />
  </g>
);

const VietnamMap = () => (
  <MapCanvas viewBox="0 0 1072 1812" preserveAspectRatio="xMidYMid slice" role="img" aria-label="Map of Vietnam">
    <rect width="1072" height="1812" fill="#f7f7f7" />
    <path d={SEA} fill="#b0d8ff" />
    <path d={HAINAN} fill="#f7f7f7" />
    <path d={LEIZHOU} fill="#f7f7f7" />
    <path d={SPIT} fill="#f7f7f7" />
    <path d={GREEN} fill="#cfecd0" />
    <path d={DARK_GREEN} fill="#bee2c0" />
    <path d={CLEARINGS} fill="#f4f8f3" />
    <path d={WATER} fill="#a6d3fd" />
    <g fill="none" strokeLinejoin="round" strokeLinecap="round">
      <path d={LANES} stroke="#f9dfa0" strokeWidth="2" />
      <path d={ROADS} stroke="#f4d06b" strokeWidth="3.500" />
      <path d={HIGHWAYS} stroke="#f3d276" strokeWidth="12" />
      <path d={HIGHWAYS} stroke="#fbe8a4" strokeWidth="8" />
      <path d={BORDERS} stroke="#767876" strokeWidth="3.500" />
      <path d={line(["n", "1395 613 1390 700 1400 740 1330 760 1310 800 1300 850 1270 860"])} stroke="#8a8a8a" strokeWidth="2.500" strokeDasharray="8 7" />
    </g>
    {TOWNS.map(([x, y]) => (
      <circle key={`${x}-${y}`} cx={x} cy={y} r="8" fill="#f0f0f0" stroke="#222" strokeWidth="3" />
    ))}
    <circle cx="178" cy="1696" r="10" fill="#fff" stroke="#000" strokeWidth="3.500" />
    <circle cx="178" cy="1696" r="5.500" />
    {LABELS.map((l) => (
      <text
        key={l.t}
        x={l.x}
        y={l.y}
        fontSize={l.s || 36}
        fontWeight={l.w || 400}
        fill={l.c || "#2b2b2b"}
        textAnchor={l.a || "start"}
        stroke="rgba(255,255,255,0.8)"
        strokeWidth="7"
        strokeLinejoin="round"
        paintOrder="stroke"
      >
        {l.t}
      </text>
    ))}
    <text x="15" y="1779" fontFamily="Inter, sans-serif" fontWeight="500" fontSize="48" stroke="#fff" strokeWidth="4" paintOrder="stroke">
      {GOOGLE.map(([ch, fill], i) => <tspan key={i} fill={fill}>{ch}</tspan>)}
    </text>
    <Motorbike />
    <Car />
    <g fill="#fff" stroke="#bfbfbf" strokeWidth="2.500">
      <path d={callout(386, 119, 943, 88)} />
      <path d={callout(407, 119, 964, 88)} />
      <path d={callout(526, 1721, 913, 88)} />
    </g>
    <g fontSize="42" fill="#000">
      <text x="421" y="180">Airblade 2020 GT102-23273</text>
      <text x="539" y="1780">355139080267005</text>
    </g>
  </MapCanvas>
);

/* ---------- screens ---------- */

const LoginScreen = () => (
  <Phone $thin>
    <LogoWrap><Logo /></LogoWrap>
    <Hotline href="tel:0901815090"><Headset />0901815090</Hotline>
    <SwitchRow>
      <Step $top={-145} $left={14}>1</Step>
      <IconButton type="button" aria-label="Chọn tài khoản"><SwitchUser /></IconButton>
      <Highlight $top={0} $left={0} $width={162} $height={157} />
    </SwitchRow>
    <Form onSubmit={(e) => e.preventDefault()}>
      <Field>
        <Person color="#ababab" width={48} height={54} stroke={4} />
        <span />
        <FieldBox><Input type="text" placeholder="Tài khoản" aria-label="Tài khoản" /></FieldBox>
      </Field>
      <Field>
        <KeyIcon />
        <span />
        <FieldBox>
          <Input type="password" placeholder="Mật khẩu" aria-label="Mật khẩu" />
          <Caret />
        </FieldBox>
      </Field>
      <Extras>
        <IconButton type="button" aria-label="QR"><QrIcon /></IconButton>
        <Forgot href="#forgot">Quên mật khẩu ?</Forgot>
      </Extras>
      <Submit type="submit">Đăng nhập</Submit>
      <Version>v1.1.3</Version>
    </Form>
    <PhoneNav />
  </Phone>
);

const AccountsScreen = () => (
  <Phone>
    <PhoneStatus time="10:16" speed="0.41" battery="97" />
    <Header>
      <BackButton type="button" aria-label="Back">
        <svg width="54" height="52" viewBox="0 0 54 52" fill="none" stroke="#fff" strokeWidth="5">
          <path d="M53 26H6M28 3 5 26 28 49" />
        </svg>
      </BackButton>
      <HeaderTitle>Chọn tài khoản</HeaderTitle>
      <Step $top={15} $left={150}>2</Step>
    </Header>
    <Accounts>
      {["demovconnect", "huyenck", "developer"].map((name, i) => (
        <AccountRow key={name}>
          <AccountButton type="button">
            <Person color="#0f69b4" width={42} height={48} stroke={4} />
            {name}
          </AccountButton>
          {i === 0 && <Pointer />}
          {i === 0 && <Highlight $top={14} $left={36} $width={503} $height={126} />}
        </AccountRow>
      ))}
    </Accounts>
    <PhoneNav />
  </Phone>
);

const MapScreen = () => (
  <Phone>
    <Step $top={8} $left={470}>3</Step>
    <PhoneStatus time="11:21" speed="1.00" battery="35" />
    <Header>
      <HeaderTitle>Demo VCN</HeaderTitle>
      <RefreshButton type="button" aria-label="Refresh">
        <svg width="76" height="62" viewBox="0 0 76 62" fill="none" stroke="#fff" strokeWidth="4.500">
          <path d="M19 11A27 27 0 0 1 66 32M57 51A27 27 0 0 1 10 30" strokeLinecap="round" />
          <path d="M56 29H76L66 43zM0 33H20L10 19z" fill="#fff" stroke="none" />
        </svg>
      </RefreshButton>
    </Header>
    <MapArea>
      <VietnamMap />
      <RefreshNote>Làm mới trong 3 giây</RefreshNote>
      <ToolStack>
        <Tool type="button" aria-label="T">
          <svg width="50" height="56" viewBox="0 0 50 56" fill={BLUE}>
            <path d="M0 0H50V15H45Q44 5 38 5H29V49Q29 51 35 51V56H15V51Q21 51 21 49V5H12Q6 5 5 15H0z" />
          </svg>
        </Tool>
        <Tool type="button">Poi</Tool>
      </ToolStack>
      <ToolStack $bottom>
        <Tool type="button" aria-label="Direction">
          <svg width="64" height="64" viewBox="0 0 64 64" fill="none" stroke={GREY} strokeWidth="5">
            <path d="M2 18V3H18M46 3H62V18M62 46V61H46M18 61H2V46" />
            <path d="M50 10 40 54 30 38 13 36z" fill={GREY} stroke="none" />
          </svg>
        </Tool>
        <Tool type="button" aria-label="Locate">
          <svg width="52" height="52" viewBox="0 0 52 52" fill="none" stroke={GREY} strokeWidth="3.500">
            <circle cx="26" cy="26" r="18" />
            <path d="M26 0V12M26 40V52M0 26H12M40 26H52" />
            <circle cx="26" cy="26" r="10" fill={GREY} stroke="none" />
          </svg>
        </Tool>
        <ZoomPair>
          <Tool type="button" aria-label="Zoom in">
            <svg width="44" height="44" viewBox="0 0 44 44" stroke={GREY} strokeWidth="3.500"><path d="M0 22H44M22 0V44" /></svg>
          </Tool>
          <Tool type="button" aria-label="Zoom out">
            <svg width="44" height="44" viewBox="0 0 44 44" stroke={GREY} strokeWidth="3.500"><path d="M0 22H44" /></svg>
          </Tool>
        </ZoomPair>
      </ToolStack>
      <ShadeStack>
        <Shade type="button" aria-label="More">
          <svg width="68" height="30" viewBox="0 0 68 30" fill="#fff">
            <rect x="2" y="2" width="64" height="26" rx="11" fill="none" stroke="#fff" strokeWidth="3" />
            <circle cx="17" cy="15" r="7.500" /><circle cx="34" cy="15" r="7.500" /><circle cx="51" cy="15" r="7.500" />
          </svg>
        </Shade>
        <Shade type="button" aria-label="Layers">
          <svg width="60" height="60" viewBox="0 0 60 60" stroke="#fff" strokeWidth="3">
            <rect x="2" y="2" width="40" height="42" rx="7" fill="rgba(226,157,90,0.8)" />
            <rect x="17" y="18" width="41" height="40" rx="7" fill="rgba(190,160,130,0.25)" strokeOpacity="0.75" />
          </svg>
        </Shade>
      </ShadeStack>
    </MapArea>
    <Tabs aria-label="Main">
      <Tab href="#map" $active>
        <svg width="73" height="66" viewBox="0 0 73 66" fill={BLUE}>
          <path d="M0 8 25 2V60L0 66zM48 6 73 0V60L48 66z" />
          <path d="M26 4 47 8V64L26 60z" fill="#fff" stroke={BLUE} strokeWidth="2" />
        </svg>
        Bản đồ
      </Tab>
      <Tab href="#devices">
        <svg width="73" height="62" viewBox="0 0 73 62" stroke={GREY} strokeWidth="7" strokeLinecap="round">
          <path d="M21 6H69M21 23H69M21 40H69M21 56H69" />
          <path d="M6 6h0.010M6 23h0.010M6 40h0.010M6 56h0.010" strokeWidth="12" />
        </svg>
        Thiết bị
      </Tab>
      <Tab href="#alerts">
        <svg width="50" height="60" viewBox="0 0 50 60" fill={GREY}>
          <path d="M25 0Q29 0 29 5C40 8 43 16 43 26V42L50 50V52H0V50L7 42V26C7 16 10 8 21 5Q21 0 25 0zM18 54H32Q30 60 25 60T18 54z" />
        </svg>
        Cảnh báo
      </Tab>
      <Tab href="#account">
        <Person color={GREY} width={46} height={52} stroke={4} />
        Tài khoản
      </Tab>
    </Tabs>
    <PhoneNav />
  </Phone>
);

export default function App() {
  return (
    <>
      <GlobalStyle />
      <Page>
        <LoginScreen />
        <ArrowCell><Arrow /></ArrowCell>
        <AccountsScreen />
        <ArrowCell $inset={16}><Arrow /></ArrowCell>
        <MapScreen />
      </Page>
    </>
  );
}
